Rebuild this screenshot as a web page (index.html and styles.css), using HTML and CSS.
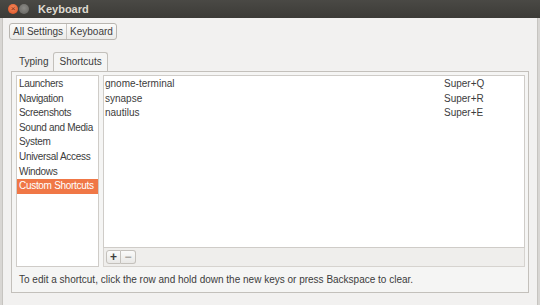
FILE: index.html
```html
<!DOCTYPE html>
<html lang="en">
<head>
  <meta charset="UTF-8">
  <title>Keyboard</title>
  <link rel="stylesheet" href="styles.css">
</head>
<body>
  <div class="window">
    <div class="titlebar">
      <span class="wbtn close">&#215;</span>
      <span class="wbtn min"></span>
      <span class="title">Keyboard</span>
    </div>

    <div class="content">
      <div class="crumbs">
        <span class="crumb">All Settings</span>
        <span class="crumb">Keyboard</span>
      </div>

      <div class="tabs">
        <span class="tab">Typing</span>
        <span class="tab active">Shortcuts</span>
      </div>

      <div class="notebook">
        <div class="panes">
          <ul class="categories">
            <li>Launchers</li>
            <li>Navigation</li>
            <li>Screenshots</li>
            <li>Sound and Media</li>
            <li>System</li>
            <li>Universal Access</li>
            <li>Windows</li>
            <li class="selected">Custom Shortcuts</li>
          </ul>

          <div class="shortcuts">
            <div class="tree">
              <div class="row"><span class="name">gnome-terminal</span><span class="accel">Super+Q</span></div>
              <div class="row"><span class="name">synapse</span><span class="accel">Super+R</span></div>
              <div class="row"><span class="name">nautilus</span><span class="accel">Super+E</span></div>
            </div>
            <div class="toolbar">
              <span class="tbtn">+</span><span class="tbtn dim">&#8722;</span>
            </div>
          </div>
        </div>

        <p class="hint">To edit a shortcut, click the row and hold down the new keys or press Backspace to clear.</p>
      </div>
    </div>
  </div>
</body>
</html>
```

FILE: styles.css
```css
* {
  box-sizing: border-box;
}
html, body {
  margin: 0;
  padding: 0;
}
body {
  width: 540px;
  height: 305px;
  overflow: hidden;
  background-color: #d8d6d3;
  font-family: "Liberation Sans", Arial, sans-serif;
  font-size: 10px;
  color: #3c3c3c;
}
.window {
  height: 305px;
  display: flex;
  flex-direction: column;
}
.titlebar {
  height: 18px;
  background: linear-gradient(#4a4945, #3c3b37);
  display: flex;
  align-items: center;
  padding-left: 8px;
  gap: 1px;
}
.wbtn {
  width: 10px;
  height: 10px;
  border-radius: 50%;
  display: flex;
  align-items: center;
  justify-content: center;
  font-size: 8px;
  line-height: 1;
  color: #7a2a12;
}
.wbtn.close {
  background: radial-gradient(circle at 50% 40%, #f68b5e, #dc4d1f);
}
.wbtn.min {
  background: radial-gradient(circle at 50% 40%, #8c8b87, #62615d);
}
.title {
  margin-left: 8px;
  color: #dfdbd2;
  font-weight: bold;
  font-size: 11px;
}
.content {
  flex: 1;
  background-color: #f2f1f0;
  border-left: 1px solid #c6c4c0;
  border-right: 1px solid #c6c4c0;
  margin: 0 2px;
  padding: 5px 8px 12px 8px;
  display: flex;
  flex-direction: column;
}
.crumbs {
  display: flex;
  align-self: flex-start;
  margin-left: -2px;
  height: 17px;
  border: 1px solid #b9b6b1;
  border-radius: 3px;
  background: linear-gradient(#fbfbfa, #ebeae8);
}
.crumb {
  padding: 0 3px;
  display: flex;
  align-items: center;
}
.crumb + .crumb {
  border-left: 1px solid #c9c6c2;
}
.tabs {
  display: flex;
  align-items: flex-end;
  margin-top: 13px;
  padding-left: 4px;
  height: 18px;
}
.tab {
  padding: 0 4px 4px 4px;
}
.tab.active {
  border: 1px solid #c3c0bb;
  border-bottom: none;
  border-radius: 3px 3px 0 0;
  padding: 3px 5px 4px 5px;
  background-color: #f5f5f4;
  margin-left: 1px;
}
.notebook {
  flex: 1;
  border: 1px solid #c3c0bb;
  background-color: #f5f5f4;
  padding: 3px 3px 0 4px;
  display: flex;
  flex-direction: column;
}
.panes {
  display: flex;
  gap: 4px;
  height: 192px;
}
.categories {
  list-style: none;
  margin: 0;
  padding: 1px 0 0 0;
  width: 83px;
  background-color: #fff;
  border: 1px solid #cfccc8;
  letter-spacing: -0.3px;
}
.categories li {
  height: 14.6px;
  line-height: 14.6px;
  padding-left: 2px;
  white-space: nowrap;
  overflow: hidden;
}
.categories li.selected {
  background-color: #f07746;
  color: #fff;
}
.shortcuts {
  flex: 1;
  display: flex;
  flex-direction: column;
}
.tree {
  flex: 1;
  background-color: #fff;
  border: 1px solid #cfccc8;
  padding-top: 1px;
}
.row {
  display: flex;
  height: 14.6px;
  line-height: 14.6px;
  padding-left: 1px;
}
.row .name {
  flex: 1;
}
.row .accel {
  width: 80px;
}
.toolbar {
  height: 19px;
  border: 1px solid #d6d3cf;
  border-top: none;
  background-color: #efeeec;
  display: flex;
  align-items: center;
  padding-left: 2px;
}
.tbtn {
  width: 15px;
  height: 14px;
  display: flex;
  align-items: center;
  justify-content: center;
  border: 1px solid #c4c1bc;
  background: linear-gradient(#fbfbfa, #e9e8e6);
  font-weight: bold;
  font-size: 12px;
}
.tbtn:first-child {
  border-radius: 3px 0 0 3px;
}
.tbtn.dim {
  border-left: none;
  border-radius: 0 3px 3px 0;
  color: #a9a7a3;
}
.hint {
  margin: 7px 0 0 3px;
}
```
